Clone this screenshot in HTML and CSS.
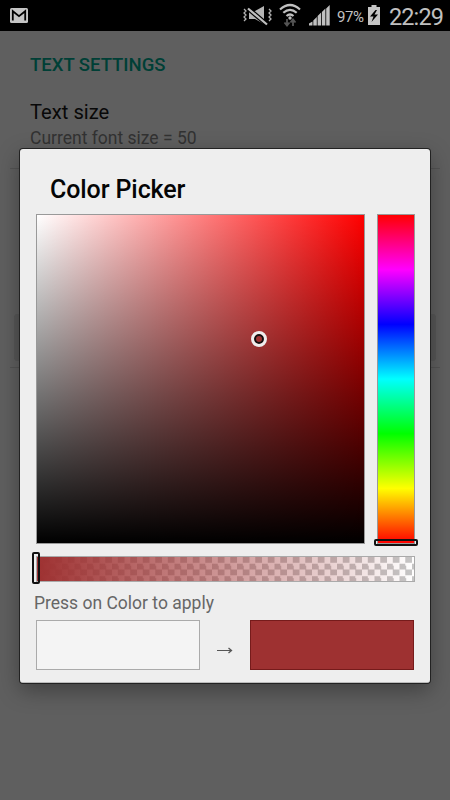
FILE: index.html
```html
<!DOCTYPE html>
<html lang="en">
    <head>
        <meta charset="utf-8">
        <title>Text Settings</title>
        <link rel="stylesheet" href="styles.css">
    </head>
    <body>
        <header class="status-bar">
            <svg class="mail" width="18" height="15" viewBox="0 0 18 15">
                <rect width="18" height="15" rx="1.5" fill="#c5c5c5"/>
                <path d="M2.8 12.5V3.2L9 8.2l6.2-5v9.3" fill="none" stroke="#000" stroke-width="1.8"/>
            </svg>
            <svg class="mute" width="29" height="20" viewBox="0 0 29 20">
                <path d="M6 5h6l9-5v18l-9-5H6z" fill="#b5b5b5"/>
                <path d="M5 2.500l19 16" stroke="#000" stroke-width="4.500"/>
                <path d="M5 2.500l19 16" stroke="#c0c0c0" stroke-width="2.200"/>
                <path d="M1 3l2 2-2 2 2 2-2 2 2 2-2 2M26 3l2 2-2 2 2 2-2 2 2 2-2 2" fill="none" stroke="#b0b0b0" stroke-width="1.3"/>
            </svg>
            <svg class="wifi" width="22" height="24" viewBox="0 0 22 24">
                <path d="M1 6.5q10-9 20 0M4.3 9.8q6.700-6 13.400 0M7.500 13q3.500-3 7 0" fill="none" stroke="#c0c0c0" stroke-width="2.200"/>
                <circle cx="11" cy="15" r="1.700" fill="#c0c0c0"/>
                <path d="M8 16v6M5.500 19.500L8 22.500l2.500-3M14 23v-6M11.500 19.500l2.500-3 2.500 3" fill="none" stroke="#555" stroke-width="1.800"/>
            </svg>
            <svg class="signal" width="21" height="21" viewBox="0 0 21 21">
                <path d="M0 20.500v-2l3.500-2v4zM4.300 20.500v-5l3.500-3.500v8.500zM8.600 20.500V11l3.500-3.500v13zM12.900 20.500V7l3.500-3.500v17zM17.200 20.500V3.500L20.700 0v20.500z" fill="#c0c0c0"/>
            </svg>
            <span class="percent">97%</span>
            <svg class="battery" width="12" height="20" viewBox="0 0 12 20">
                <path d="M0 2h3.500V0h5v2H12v18H0z" fill="#c5c5c5"/>
                <path d="M7.500 5L2 11.500h3.500l-2 5.500L10 9.500H6.500L9 5z" fill="#000"/>
            </svg>
            <span class="clock">22:29</span>
        </header>
        <main class="settings">
            <h1>TEXT SETTINGS</h1>
            <h2>Text size</h2>
            <p>Current font size = 50</p>
            <div class="divider"></div>
            <div class="field"></div>
            <div class="divider"></div>
        </main>
        <section class="dialog">
            <h2>Color Picker</h2>
            <div class="panels">
                <div class="saturation"><span class="pointer"></span></div>
                <div class="hue"><span class="hue-thumb"></span></div>
            </div>
            <div class="alpha"><span class="alpha-thumb"></span></div>
            <p>Press on Color to apply</p>
            <div class="swatches">
                <div class="swatch old"></div>
                <svg width="18" height="8" viewBox="0 0 18 8">
                    <path d="M1 4.500h15" stroke="#555" stroke-width="1"/>
                    <path d="M12.500 2l3 2.500-3 2.500" fill="none" stroke="#555" stroke-width="1.300"/>
                </svg>
                <div class="swatch new"></div>
            </div>
        </section>
    </body>
</html>
```
FILE: styles.css
```css
* {
    box-sizing: border-box;
}
body {
    margin: 0;
    height: 800px;
    position: relative;
    overflow: hidden;
    background: #5f5f5f;
    font-family: Roboto, sans-serif;
}
h1, h2, p {
    margin: 0;
    font-weight: 400;
    white-space: nowrap;
}
.status-bar {
    display: flex;
    align-items: flex-start;
    height: 31px;
    padding-left: 10px;
    background: #000;
    color: #c0c0c0;
}
.status-bar svg {
    flex: none;
}
.mail {
    margin-top: 8px;
}
.mute {
    margin: 6px 0 0 215px;
}
.wifi {
    margin: 3px 0 0 7px;
}
.signal {
    margin: 5px 0 0 8px;
}
.percent {
    width: 28px;
    margin: 7px 0 0 7px;
    font-size: 15px;
    line-height: 20px;
    letter-spacing: -0.4px;
}
.battery {
    margin: 5px 0 0 3px;
}
.clock {
    margin: 3px 0 0 9px;
    font-size: 23.5px;
    line-height: 28px;
    letter-spacing: -0.9px;
}
.settings {
    padding: 23px 10px 0;
}
.settings h1 {
    padding-left: 20px;
    color: #003f36;
    font-size: 18.5px;
    font-weight: 500;
    line-height: 22px;
}
.settings h2 {
    margin-top: 24px;
    padding-left: 20px;
    color: #080808;
    font-size: 20.2px;
    line-height: 24px;
}
.settings p {
    padding-left: 20px;
    color: #323232;
    font-size: 17.5px;
    line-height: 28px;
}
.divider {
    height: 1px;
    margin-top: 16px;
    background: #535353;
}
.field {
    height: 47px;
    margin: 145px 4px -10px;
    border-radius: 3px;
    background: #575757;
}
.dialog {
    position: absolute;
    top: 149px;
    left: 20px;
    width: 410px;
    height: 534px;
    padding: 26px 15px 0;
    border-radius: 3px;
    background: #eee;
    border-bottom: 1px solid #bbb;
    box-shadow: 0 0 0 1px #222, 0 7px 22px rgba(0, 0, 0, 0.35);
}
.dialog h2 {
    padding-left: 15px;
    color: #050505;
    font-size: 25px;
    font-weight: 500;
    line-height: 30px;
    letter-spacing: -0.1px;
}
.panels {
    display: flex;
    justify-content: space-between;
    margin-top: 9px;
}
.saturation {
    position: relative;
    width: 329px;
    height: 330px;
    margin-left: 1px;
    border: 1px solid #999;
    background: linear-gradient(to bottom, transparent, #000), linear-gradient(to right, #fff, #f00);
}
.pointer {
    position: absolute;
    top: 116px;
    left: 214px;
    width: 16px;
    height: 16px;
    border: 3px solid #eee;
    border-radius: 50%;
    box-shadow: inset 0 0 0 2px #111;
}
.hue {
    position: relative;
    width: 38px;
    height: 330px;
    border: 1px solid #999;
    background: linear-gradient(to bottom, #f00, #f0f, #00f, #0ff, #0f0, #ff0, #f00);
}
.hue-thumb {
    position: absolute;
    top: 324px;
    left: -4px;
    width: 44px;
    height: 7px;
    border: 2px solid #111;
    border-radius: 2px;
}
.alpha {
    position: relative;
    height: 26px;
    margin: 12px 0 0 1px;
    border: 1px solid #aaa;
    background:
        linear-gradient(to right, #9e3131, rgba(158, 49, 49, 0)),
        repeating-conic-gradient(#c5c5c5 0 25%, #fff 0 50%) 0 0 / 12.5px 12.5px;
}
.alpha-thumb {
    position: absolute;
    top: -5px;
    left: -5px;
    width: 8px;
    height: 32px;
    border: 2px solid #111;
    border-radius: 2px;
}
.dialog p {
    margin: 10px 0 0 -1px;
    color: #666;
    font-size: 17.5px;
    line-height: 22px;
}
.swatches {
    display: flex;
    align-items: center;
    justify-content: space-between;
    margin: 6px 1px 0;
}
.swatches svg {
    margin-top: 10px;
}
.swatch {
    width: 164px;
    height: 50px;
    border: 1px solid #aaa;
}
.old {
    background: #f4f4f4;
}
.new {
    border-color: #761b1b;
    background: #9e3131;
}
```
